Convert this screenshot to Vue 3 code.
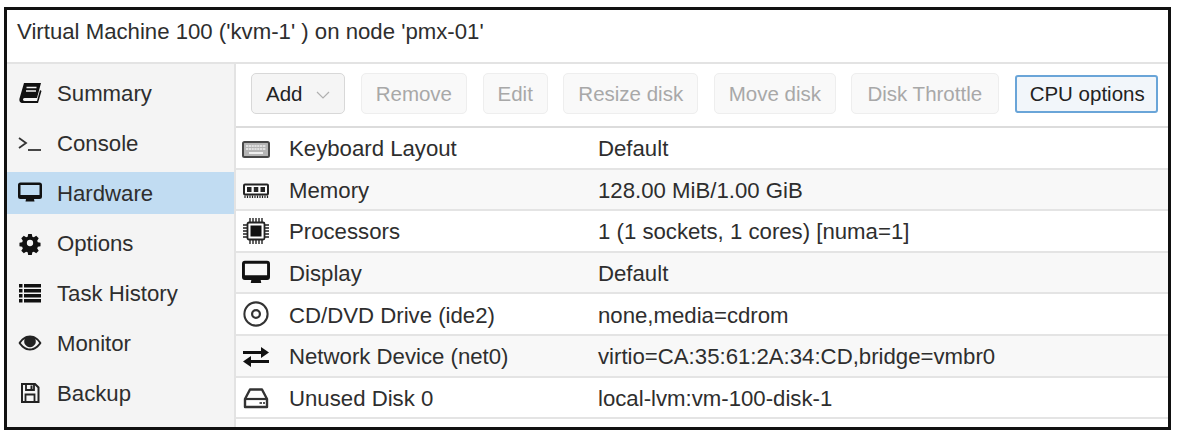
<script setup>
const navItems = [
  { label: 'Summary', icon: 'book' },
  { label: 'Console', icon: 'terminal' },
  { label: 'Hardware', icon: 'desktop', active: true },
  { label: 'Options', icon: 'gear' },
  { label: 'Task History', icon: 'list' },
  { label: 'Monitor', icon: 'eye' },
  { label: 'Backup', icon: 'floppy' },
]

const buttons = ['Remove', 'Edit', 'Resize disk', 'Move disk', 'Disk Throttle']

const rows = [
  { icon: 'keyboard', name: 'Keyboard Layout', value: 'Default' },
  { icon: 'memory', name: 'Memory', value: '128.00 MiB/1.00 GiB' },
  { icon: 'cpu', name: 'Processors', value: '1 (1 sockets, 1 cores) [numa=1]' },
  { icon: 'desktop', name: 'Display', value: 'Default' },
  { icon: 'cd', name: 'CD/DVD Drive (ide2)', value: 'none,media=cdrom' },
  { icon: 'network', name: 'Network Device (net0)', value: 'virtio=CA:35:61:2A:34:CD,bridge=vmbr0' },
  { icon: 'hdd', name: 'Unused Disk 0', value: 'local-lvm:vm-100-disk-1' },
]
</script>

<template>
  <!-- shared icon symbols -->
  <svg class="defs" width="0" height="0">
    <symbol id="book" viewBox="0 0 24 24">
      <path d="M6 2h17l-4 15H6.500c-2 0-2 3 0 3H19l3-11 1.500 1L20 22H5c-3 0-4-2-3.500-4.500z" fill="#111"/>
      <path d="M8.500 6.500h10M8 10h10" stroke="#f3f3f3" stroke-width="1.400"/>
    </symbol>
    <symbol id="terminal" viewBox="0 0 24 24">
      <path d="M1 7l7 5-7 5" fill="none" stroke="#333" stroke-width="1.800"/>
      <path d="M10 19h13" stroke="#333" stroke-width="1.800"/>
    </symbol>
    <symbol id="desktop" viewBox="0 0 24 21">
      <path d="M2.500 0h19A2.500 2.500 0 0 1 24 2.500V14a2.500 2.500 0 0 1-2.500 2.500H16l.5 2.500h-9l.5-2.500H2.500A2.500 2.500 0 0 1 0 14V2.500A2.500 2.500 0 0 1 2.500 0zM2.500 2.500v10h19v-10z" fill="#111" fill-rule="evenodd"/>
    </symbol>
    <symbol id="gear" viewBox="0 0 24 24">
      <path d="M10 2h4l.6 3 1.700.7 2.600-1.700 2.800 2.800-1.700 2.600.7 1.700 3 .6v4l-3 .6-.7 1.700 1.700 2.600-2.800 2.800-2.600-1.700-1.700.7-.6 3h-4l-.6-3-1.700-.7-2.600 1.700-2.800-2.800 1.700-2.600-.7-1.700-3-.6v-4l3-.6.7-1.700-1.700-2.600 2.800-2.800 2.600 1.700 1.700-.7zM12 8.500a3.500 3.500 0 1 0 0 7 3.500 3.500 0 0 0 0-7z" fill="#111" fill-rule="evenodd" transform="translate(1.200 1.200) scale(.9)"/>
    </symbol>
    <symbol id="list" viewBox="0 0 24 24">
      <path d="M1 3h3.500v3.500H1zM1 8h3.500v3.500H1zM1 13h3.500v3.500H1zM1 18h3.500v3.500H1zM6 3h17v3.500H6zM6 8h17v3.500H6zM6 13h17v3.500H6zM6 18h17v3.500H6z" fill="#111"/>
    </symbol>
    <symbol id="eye" viewBox="0 0 24 24">
      <path d="M12 4.500c5 0 9 3.500 11.500 7.500C21 16 17 19.500 12 19.500S3 16 .5 12C3 8 7 4.500 12 4.500zM2.800 12c2 2.800 5.200 5.500 9.200 5.500s7.200-2.700 9.200-5.500c-1-1.500-2.300-2.900-3.900-3.900a5.800 5.800 0 1 1-10.600 0C5.100 9.100 3.800 10.500 2.800 12z" fill="#222" fill-rule="evenodd"/>
    </symbol>
    <symbol id="floppy" viewBox="0 0 24 24">
      <path d="M4 3h13l3.500 3.500V21H4z" fill="none" stroke="#222" stroke-width="2"/>
      <path d="M8 3.500v5.500h8V3.500M7.500 21v-7.500h9V21" fill="none" stroke="#222" stroke-width="1.800"/>
      <path d="M12.500 4.500h2V8h-2z" fill="#222"/>
    </symbol>
    <symbol id="keyboard" viewBox="0 0 28 26">
      <rect x="1" y="7" width="26" height="15" rx="1.500" fill="#b5b5b5" stroke="#484848" stroke-width="2"/>
      <path d="M4 11h20M4 14h20" stroke="#efefef" stroke-width="1.500" stroke-dasharray="2.200 .6"/>
      <path d="M7 18h14" stroke="#efefef" stroke-width="2"/>
    </symbol>
    <symbol id="memory" viewBox="0 0 28 26">
      <rect x="2" y="8.500" width="24" height="10" rx="1" fill="#fff" stroke="#222" stroke-width="2"/>
      <path d="M5 11h4.500v5H5zM11.800 11h4.500v5h-4.500zM18.500 11H23v5h-4.500z" fill="#222"/>
      <path d="M3 19.500V22M5.500 19.500V22M8 19.500V22M10.500 19.500V22M13 19.500V22M15.500 19.500V22M18 19.500V22M20.500 19.500V22M23 19.500V22M25.500 19.500V22" stroke="#222" stroke-width="1.200"/>
    </symbol>
    <symbol id="cpu" viewBox="0 0 26 26">
      <rect x="4.500" y="4.500" width="17" height="17" rx="1.500" fill="#fff" stroke="#222" stroke-width="1.800"/>
      <rect x="7.500" y="7.500" width="11" height="11" fill="#111"/>
      <path d="M7 0v4M10 0v4M13 0v4M16 0v4M19 0v4M7 22v4M10 22v4M13 22v4M16 22v4M19 22v4M0 7h4M0 10h4M0 13h4M0 16h4M0 19h4M22 7h4M22 10h4M22 13h4M22 16h4M22 19h4" stroke="#222" stroke-width="1.400"/>
    </symbol>
    <symbol id="cd" viewBox="0 0 28 28">
      <circle cx="14" cy="14" r="12.500" fill="none" stroke="#333" stroke-width="2.200"/>
      <circle cx="14" cy="14" r="4.200" fill="none" stroke="#333" stroke-width="2.400"/>
    </symbol>
    <symbol id="network" viewBox="0 0 28 26">
      <path d="M1 8h18V4l8 5.500-8 5.500v-4H1z" fill="#111"/>
      <path d="M27 17H9v-4l-8 5.500L9 24v-4h18z" fill="#111"/>
    </symbol>
    <symbol id="hdd" viewBox="0 0 28 26">
      <path d="M8 5.500h12l5 9.500v8H3v-8z" fill="none" stroke="#333" stroke-width="2.400" stroke-linejoin="round"/>
      <path d="M3 15h22" stroke="#333" stroke-width="2.200"/>
      <path d="M17.500 19h2.500M21 19h2" stroke="#555" stroke-width="1.800"/>
    </symbol>
  </svg>

  <div class="frame">
    <header class="title-bar">Virtual Machine 100 ('kvm-1' ) on node 'pmx-01'</header>
    <div class="body">
      <nav class="sidebar">
        <a
          v-for="item in navItems"
          :key="item.label"
          class="nav-item"
          :class="{ active: item.active }"
        >
          <svg class="nav-icon" width="24" height="24"><use :href="`#${item.icon}`" /></svg>
          <span class="nav-label">{{ item.label }}</span>
        </a>
      </nav>
      <main class="content">
        <div class="toolbar">
          <button class="btn add">
            Add
            <svg class="caret" width="14" height="8" viewBox="0 0 14 8">
              <path d="M1 1l6 6 6-6" fill="none" stroke="#b0b0b0" stroke-width="1.200"/>
            </svg>
          </button>
          <button v-for="label in buttons" :key="label" class="btn disabled">{{ label }}</button>
          <button class="btn focused">CPU options</button>
        </div>
        <div class="grid">
          <div v-for="(row, index) in rows" :key="row.name" class="row" :class="{ odd: index % 2 === 1 }">
            <svg class="row-icon" width="28" height="26"><use :href="`#${row.icon}`" /></svg>
            <span class="row-name">{{ row.name }}</span>
            <span class="row-value">{{ row.value }}</span>
          </div>
        </div>
      </main>
    </div>
  </div>
</template>

<style>
body {
  background: #fff;
}
</style>

<style scoped>
.defs {
  position: absolute;
}
.frame {
  width: 1167px;
  height: 423px;
  margin: 7px 0 0 4px;
  box-sizing: border-box;
  border: 3px solid #111;
  display: flex;
  flex-direction: column;
  font-family: "Liberation Sans", Arial, sans-serif;
  font-size: 22.200px;
  color: #2e2e2e;
  background: #fff;
  overflow: hidden;
}
.title-bar {
  height: 54px;
  flex: none;
  box-sizing: border-box;
  padding: 9px 0 0 10px;
  line-height: 26px;
  border-bottom: 2px solid #e3e3e3;
}
.body {
  flex: 1;
  display: flex;
  min-height: 0;
}
.sidebar {
  width: 229px;
  flex: none;
  box-sizing: border-box;
  background: #f4f4f4;
  border-right: 2px solid #e3e3e3;
  padding-top: 8px;
  display: flex;
  flex-direction: column;
  gap: 8px;
}
.nav-item {
  height: 42px;
  display: flex;
  align-items: center;
  padding-left: 11px;
}
.nav-item.active {
  background: #c1dcf2;
}
.nav-icon {
  flex: none;
  margin-right: 15px;
}
.nav-label {
  padding-top: 2px;
}
.content {
  flex: 1;
  min-width: 0;
  display: flex;
  flex-direction: column;
}
.toolbar {
  height: 64px;
  flex: none;
  box-sizing: border-box;
  padding: 9px 0 0 15px;
  display: flex;
  align-items: flex-start;
  gap: 15.500px;
  border-bottom: 2px solid #dcdcdc;
}
.btn {
  height: 41px;
  padding: 0 14px;
  border: 1px solid #e8e8e8;
  border-radius: 5px;
  background: #f5f5f5;
  font: inherit;
  font-size: 20.500px;
  color: #2e2e2e;
  white-space: nowrap;
}
.btn.add {
  border-color: #d8d8d8;
  color: #222;
}
.btn.disabled {
  background: #f9f9f9;
  border-color: #eee;
  color: #a8a8a8;
}
.btn.disabled:nth-child(6) {
  padding: 0 16px 0 15px;
}
.btn.focused {
  height: 38px;
  margin-top: 2px;
  border: 2px solid #6aa5d8;
  border-radius: 3px;
  background: #f2f6fa;
  padding: 0 11px 0 13px;
  color: #222;
}
.caret {
  margin-left: 8px;
  vertical-align: 2px;
}
.row {
  height: 41.600px;
  box-sizing: border-box;
  display: flex;
  align-items: center;
  padding-left: 6px;
  border-bottom: 2px solid #e4e4e4;
}
.row.odd {
  background: #f8f8f8;
}
.row-icon {
  flex: none;
  margin-right: 19px;
}
.row-name {
  width: 309px;
  flex: none;
  padding-top: 3px;
}
.row-value {
  padding-top: 3px;
}
</style>
